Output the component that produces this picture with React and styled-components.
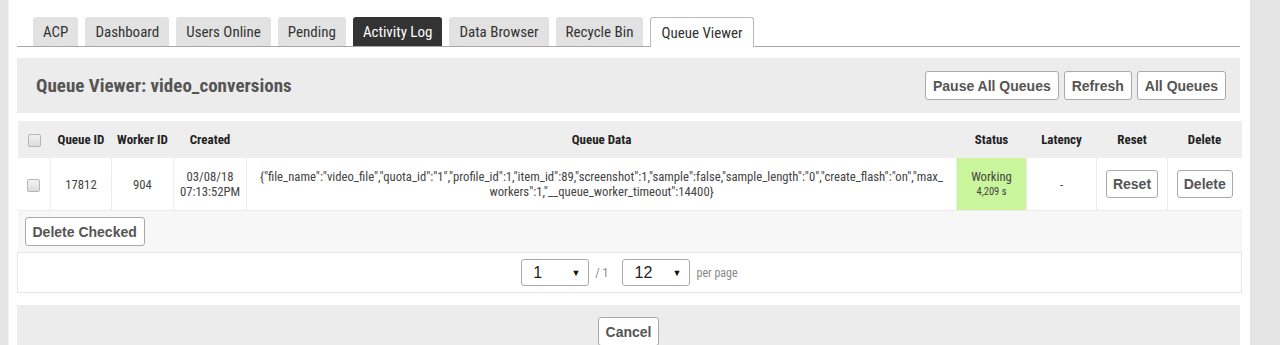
import styled, { createGlobalStyle } from "styled-components";

const GlobalStyle = createGlobalStyle`
  html, body {
    margin: 0;
    padding: 0;
    background: #e4e4e4;
  }
  body {
    font-family: "Roboto Condensed", "Liberation Sans Narrow", "DejaVu Sans Condensed", Roboto, sans-serif;
    color: #333;
  }
`;

const condensed = `"Roboto Condensed", "Liberation Sans Narrow", "DejaVu Sans Condensed", Roboto, sans-serif`;
const arial = `"Liberation Sans", Arial, sans-serif`;

const Page = styled.div`
  margin-left: 8px;
  width: 1242px;
  min-height: 345px;
  background: #fff;
  box-sizing: border-box;
  padding: 17px 10px 0 8px;
  border-left: 1px solid #f4f4f4;
`;

const TabBar = styled.ul`
  display: flex;
  gap: 7px;
  list-style: none;
  margin: 0;
  padding: 0 0 0 16px;
  border-bottom: 1px solid #a8a8a8;
  height: 29px;
`;

const Tab = styled.li`
  height: ${p => (p.$current ? "30px" : "29px")};
  box-sizing: border-box;
  padding: 0 10px;
  display: flex;
  align-items: center;
  font-family: ${condensed};
  font-size: 15px;
  border-radius: 3px 3px 0 0;
  background: ${p => (p.$dark ? "#333" : p.$current ? "#fff" : "#e2e2e2")};
  color: ${p => (p.$dark ? "#fff" : "#333")};
  border: ${p => (p.$current ? "1px solid #b8b8b8" : "none")};
  border-bottom: none;
`;

const Panel = styled.div`
  background: #ececec;
  display: flex;
  align-items: center;
  justify-content: space-between;
  margin-top: 11px;
  height: 55px;
  padding: 0 14px 0 19px;
`;

const Title = styled.h2`
  margin: 0;
  font-family: ${condensed};
  font-size: 19px;
  font-weight: 700;
  color: #555;
`;

const ButtonGroup = styled.div`
  display: flex;
  gap: 5px;
`;

const Button = styled.button`
  font-family: ${arial};
  font-weight: 700;
  font-size: 14px;
  color: #555;
  background: #fff;
  border: 1px solid #aaa;
  border-radius: 3px;
  height: ${p => p.$h || 29}px;
  padding: 0 ${p => p.$pad || 7}px;
  cursor: pointer;
`;

const Table = styled.table`
  margin-top: 8px;
  width: 1224px;
  table-layout: fixed;
  border-collapse: collapse;
  font-family: ${condensed};
  font-size: 12.7px;
`;

const HeadCell = styled.th`
  background: #eee;
  height: 37px;
  font-weight: 700;
  font-size: 13px;
  color: #222;
  text-align: center;
  padding: 0 4px;
`;

const Cell = styled.td`
  height: 52px;
  text-align: center;
  color: #444;
  border-left: 1px solid #ececec;
  padding: 0 6px;
  background: ${p => p.$bg || "#fff"};
  line-height: 15px;
  &:first-child {
    border-left: none;
  }
`;

const Small = styled.div`
  font-size: 10.5px;
`;

const Check = styled.span`
  display: inline-block;
  width: 11px;
  height: 11px;
  border: 1px solid #b5b5b5;
  border-radius: 2px;
  background: linear-gradient(#f2f2f2, #dcdcdc);
  vertical-align: middle;
`;

const ActionRow = styled.td`
  background: #f7f7f7;
  height: 41px;
  padding: 0 7px;
  border-top: 1px solid #ececec;
`;

const PagerRow = styled.td`
  height: 39px;
  padding: 0;
  text-align: center;
  border: 1px solid #e6e6e6;
  background: #fff;
`;

const Pager = styled.div`
  display: inline-flex;
  align-items: center;
  gap: 6px;
  font-size: 12px;
  color: #888;
  font-family: ${condensed};
`;

const SelectBox = styled.div`
  width: 68px;
  height: 27px;
  box-sizing: border-box;
  border: 1px solid #aaa;
  border-radius: 3px;
  display: flex;
  align-items: center;
  justify-content: space-between;
  padding: 0 8px 0 11px;
  font-family: ${arial};
  font-size: 16px;
  color: #222;
  margin-left: ${p => p.$ml || 0}px;
`;

const Arrow = styled.span`
  font-size: 9px;
  color: #111;
`;

const Footer = styled.div`
  margin-top: 12px;
  background: #ececec;
  height: 60px;
  display: flex;
  justify-content: center;
  padding-top: 12px;
  box-sizing: border-box;
`;

const tabs = ["ACP", "Dashboard", "Users Online", "Pending", "Activity Log", "Data Browser", "Recycle Bin", "Queue Viewer"];
const cols = [
  ["", 33], ["Queue ID", 61], ["Worker ID", 62], ["Created", 73], ["Queue Data", 710],
  ["Status", 70], ["Latency", 70], ["Reset", 71], ["Delete", 74],
];

const App = () => {
  return (
    <>
      <GlobalStyle />
      <Page>
        <TabBar>
          {tabs.map(t => (
            <Tab key={t} $dark={t === "Activity Log"} $current={t === "Queue Viewer"}>{t}</Tab>
          ))}
        </TabBar>
        <Panel>
          <Title>Queue Viewer: video_conversions</Title>
          <ButtonGroup>
            <Button>Pause All Queues</Button>
            <Button>Refresh</Button>
            <Button>All Queues</Button>
          </ButtonGroup>
        </Panel>
        <Table>
          <colgroup>
            {cols.map(([n, w], i) => <col key={i} style={{ width: w }} />)}
          </colgroup>
          <thead>
            <tr>
              {cols.map(([n], i) => (
                <HeadCell key={i}>{i === 0 ? <Check /> : n}</HeadCell>
              ))}
            </tr>
          </thead>
          <tbody>
            <tr>
              <Cell><Check /></Cell>
              <Cell>17812</Cell>
              <Cell>904</Cell>
              <Cell>03/08/18<br />07:13:52PM</Cell>
              <Cell>
                {'{"file_name":"video_file","quota_id":"1","profile_id":1,"item_id":89,"screenshot":1,"sample":false,"sample_length":"0","create_flash":"on","max_'}
                <br />
                {'workers":1,"__queue_worker_timeout":14400}'}
              </Cell>
              <Cell $bg="#c9f59c">Working<Small>4,209 s</Small></Cell>
              <Cell>-</Cell>
              <Cell><Button $h={28} $pad={6}>Reset</Button></Cell>
              <Cell><Button $h={28} $pad={6}>Delete</Button></Cell>
            </tr>
            <tr>
              <ActionRow colSpan={9}><Button $h={29}>Delete Checked</Button></ActionRow>
            </tr>
            <tr>
              <PagerRow colSpan={9}>
                <Pager>
                  <SelectBox>1<Arrow>▼</Arrow></SelectBox>
                  / 1
                  <SelectBox $ml={8}>12<Arrow>▼</Arrow></SelectBox>
                  per page
                </Pager>
              </PagerRow>
            </tr>
          </tbody>
        </Table>
        <Footer>
          <Button $h={29}>Cancel</Button>
        </Footer>
      </Page>
    </>
  );
};

export default App;
